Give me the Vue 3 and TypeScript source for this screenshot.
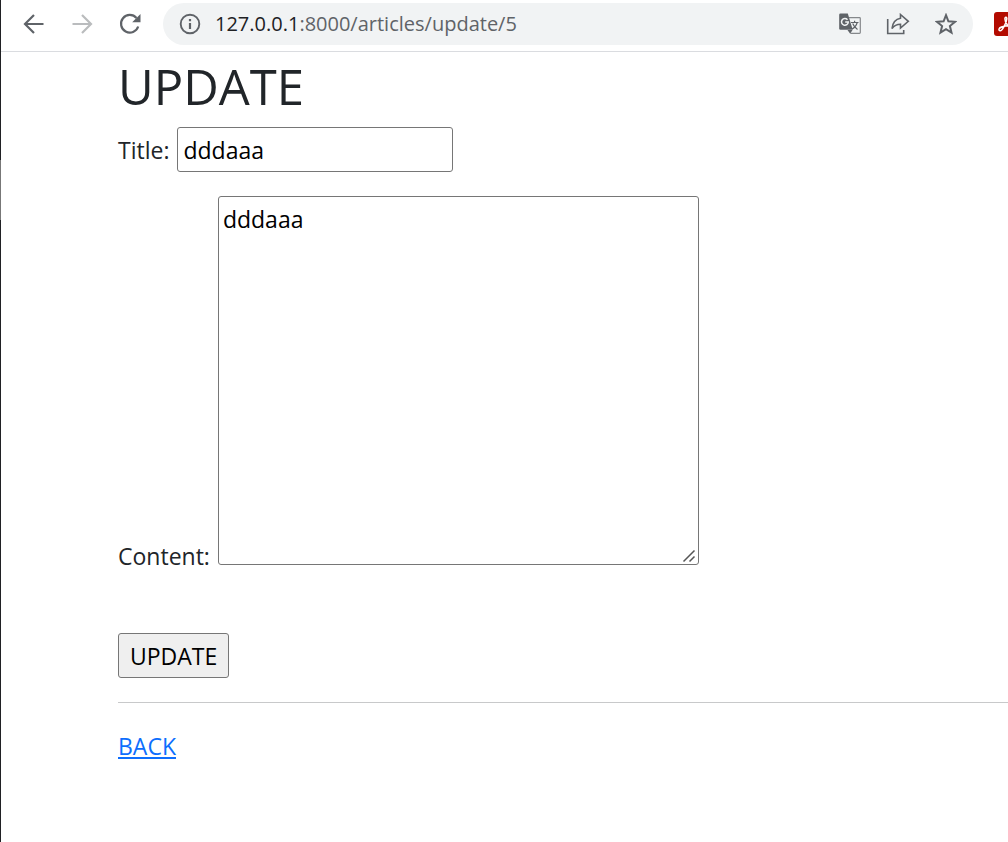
<script setup lang="ts">
import { ref } from 'vue'

const title = ref('dddaaa')
const content = ref('dddaaa')
</script>

<template>
  <div class="window">
    <div class="edge"><span class="edge-light"></span></div>
    <div class="view">
      <header class="toolbar">
        <nav class="nav">
          <button type="button" class="icon" aria-label="Back">
            <svg width="22" height="22" viewBox="0 0 22 22"><path d="M20.500 11H2.500M11 2L2 11L11 20" fill="none" stroke="#5f6368" stroke-width="2.200" /></svg>
          </button>
          <button type="button" class="icon" aria-label="Forward">
            <svg width="22" height="22" viewBox="0 0 22 22"><path d="M1.500 11H19.500M11 2L20 11L11 20" fill="none" stroke="#babcbe" stroke-width="2.200" /></svg>
          </button>
          <button type="button" class="icon" aria-label="Reload">
            <svg width="22" height="22" viewBox="0 0 22 22"><path d="M19.200 13.500A8.800 8.800 0 1 1 17.500 5" fill="none" stroke="#5f6368" stroke-width="2.200" /><path d="M21.500 1V9.300H13.200Z" fill="#5f6368" /></svg>
          </button>
        </nav>
        <div class="address">
          <svg width="22" height="22" viewBox="0 0 22 22"><circle cx="11" cy="11" r="9.300" fill="none" stroke="#5f6368" stroke-width="1.900" /><path d="M9.900 6H12.100V8.200H9.900ZM9.900 10H12.100V16H9.900Z" fill="#5f6368" /></svg>
          <div class="url"><span class="host">127.0.0.1</span>:8000/articles/update/5</div>
          <div class="actions">
            <button type="button" class="icon" aria-label="Translate">
              <svg width="22" height="22" viewBox="0 0 22 22">
                <path d="M10 4.700H20.500Q21.300 4.700 21.300 5.500V19.500Q21.300 20.300 20.500 20.300H11.500" fill="none" stroke="#85888b" stroke-width="1.200" />
                <path d="M1.500 0.500H8.800L13.700 16.800H1.500Q0.200 16.800 0.200 15.500V1.800Q0.200 0.500 1.500 0.500Z" fill="#5f6368" />
                <path d="M8.500 17H13.500L11.200 20.800Z" fill="#5f6368" />
                <path d="M8.500 6.700A3.400 3.400 0 1 0 9.300 9H6.200" fill="none" stroke="#f1f3f4" stroke-width="1.500" />
                <path d="M12 9.500H19.500M15.600 7.800V9.500M18.200 9.500Q17 14 13 16M13.700 10.500Q15 14 18.500 16.400" fill="none" stroke="#5f6368" stroke-width="1.200" />
              </svg>
            </button>
            <button type="button" class="icon" aria-label="Share">
              <svg width="24" height="22" viewBox="0 0 24 22">
                <path d="M1.700 6V20.500H17.700V17" fill="none" stroke="#5f6368" stroke-width="1.600" />
                <path d="M14.500 1.500L22.300 8.300L14.500 15V11.200Q9 11.200 6 15.500Q7 6.500 14.500 5.200Z" fill="none" stroke="#5f6368" stroke-width="1.600" />
              </svg>
            </button>
            <button type="button" class="icon" aria-label="Bookmark">
              <svg width="22" height="22" viewBox="0 0 22 22"><path d="M11 2.200L13.400 8.300L20 8.800L14.900 13.100L16.500 19.500L11 16.100L5.500 19.500L7.100 13.100L2 8.800L8.600 8.300Z" fill="none" stroke="#5f6368" stroke-width="2" /></svg>
            </button>
          </div>
        </div>
        <button type="button" class="icon extension" aria-label="PDF extension">
          <svg width="24" height="24" viewBox="0 0 24 24">
            <rect width="24" height="24" rx="3" fill="#b30b00" />
            <path d="M5 17.200C5.500 15 11 13.800 16 13.800C20 13.800 20 16.300 18 16.300C14.500 16.300 10.500 9 11 6.200C11.400 4.600 13 5 12.800 7C12.500 10.500 8.500 18.800 6.200 18.800Q4.800 18.600 5 17.200Z" fill="none" stroke="#fff" stroke-width="1.500" />
          </svg>
        </button>
      </header>

      <main class="container">
        <h1>UPDATE</h1>
        <form @submit.prevent>
          <div class="field">
            <label for="title">Title:</label>
            <input id="title" v-model="title" type="text" name="title" />
          </div>
          <div class="field content-field">
            <label for="content">Content:</label>
            <div class="area">
              <textarea id="content" v-model="content" name="content"></textarea>
              <svg class="grip" width="14" height="14" viewBox="0 0 14 14"><path d="M1.500 12.500L12.500 1.500M7.500 12.500L12.500 7.500" stroke="#555" stroke-width="1.500" /></svg>
            </div>
          </div>
          <button type="submit" class="submit">UPDATE</button>
        </form>
        <hr />
        <a href="#">BACK</a>
      </main>
    </div>
  </div>
</template>

<style>
body {
  margin: 0;
  background: #fff;
}
</style>

<style scoped>
* {
  box-sizing: border-box;
}

.window {
  display: flex;
  min-height: 100vh;
  font-family: "Open Sans", "Noto Sans", sans-serif;
  font-size: 23px;
  line-height: 36px;
  color: #212529;
}

.edge {
  flex: none;
  width: 1px;
  padding-top: 160px;
  background: #202124;
}

.edge-light {
  display: block;
  height: 60px;
  background: #777;
}

.view {
  flex: 1;
  min-width: 0;
  overflow: hidden;
}

.toolbar {
  display: flex;
  align-items: center;
  height: 52px;
  padding: 0 0 4px 22px;
  border-bottom: 1px solid #dadce0;
}

.nav {
  display: flex;
  gap: 26px;
  margin-right: 22px;
}

.icon {
  display: flex;
  flex: none;
  padding: 0;
  border: 0;
  background: none;
}

.address {
  display: flex;
  flex: 1;
  align-items: center;
  height: 42px;
  padding: 0 16px;
  border-radius: 21px;
  background: #f1f3f4;
}

.url {
  flex: 1;
  margin-left: 14px;
  font-size: 20px;
  line-height: 28px;
  color: #5f6368;
}

.host {
  color: #202124;
}

.actions {
  display: flex;
  gap: 25px;
}

.extension {
  margin: 0 -10px 0 21px;
}

.container {
  padding: 8px 0 0 117px;
}

h1 {
  margin: 0 0 15px;
  font-size: 49px;
  font-weight: 400;
  line-height: 52px;
}

.field {
  display: flex;
  align-items: center;
  gap: 8px;
}

input,
textarea {
  border: 1px solid #767676;
  border-radius: 3px;
  background: #fff;
  color: #000;
  font: inherit;
}

input {
  width: 276px;
  height: 45px;
  padding: 2px 5px;
}

.content-field {
  align-items: flex-end;
  margin: 24px 0 68px;
}

.content-field label {
  margin-bottom: -9px;
}

.area {
  position: relative;
  display: flex;
}

textarea {
  width: 481px;
  height: 369px;
  padding: 4px;
  resize: none;
}

.grip {
  position: absolute;
  right: 3px;
  bottom: 2px;
}

.submit {
  display: block;
  height: 45px;
  padding: 0 11px;
  border: 1px solid #767676;
  border-radius: 3px;
  background: #efefef;
  color: #000;
  font: inherit;
}

hr {
  margin: 24px 0 25px;
  border: 0;
  border-top: 1px solid #c8c9ca;
}

a {
  color: #0d6efd;
  text-decoration: underline;
}
</style>
